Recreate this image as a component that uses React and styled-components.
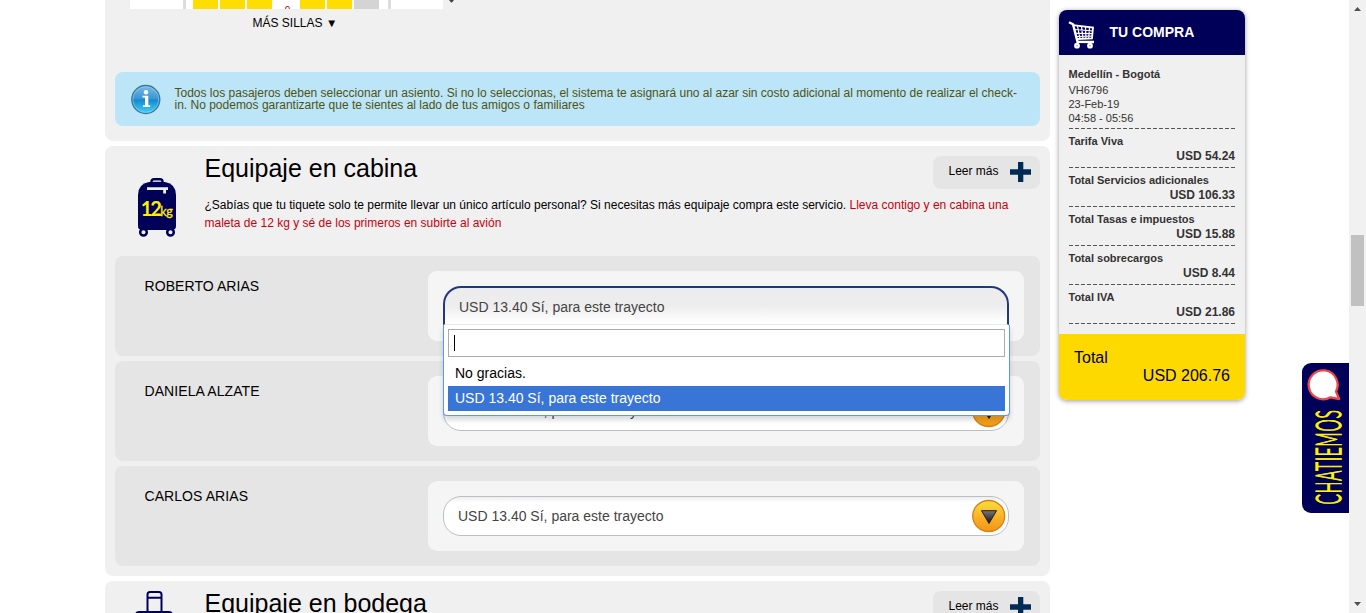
import React from "react";
import styled, { createGlobalStyle, css } from "styled-components";

const GlobalStyle = createGlobalStyle`
  * { box-sizing: border-box; }
  html, body { margin: 0; height: 100%; overflow: hidden; }
  body { background: #fff; color: #000; font-family: Arial, "Liberation Sans", sans-serif; font-size: 12px; }
  h2, p, ul { margin: 0; padding: 0; font-weight: normal; }
`;

const Page = styled.div`
  display: flex;
  align-items: flex-start;
  height: 613px;
  width: 1366px;
  overflow: hidden;
`;

const Main = styled.main`
  display: flex;
  flex-direction: column;
  gap: 5px;
  flex: none;
  width: 945px;
  height: 613px;
  margin-left: 105px;
  overflow: hidden;
`;

const Section = styled.section`
  flex: none;
  height: ${(p) => p.$height}px;
  padding: 0 10px;
  background: #f0f0f0;
  border-radius: ${(p) => (p.$open ? "0 0 8px 8px" : "8px")};
`;

const SeatRow = styled.div`
  display: flex;
  gap: 2px;
  width: 313px;
  height: 9px;
  margin-left: 15px;
  background: #fff;
`;

const Wall = styled.div`
  width: 3px;
  margin: 0 ${(p) => p.$right}px 0 ${(p) => p.$left}px;
  background: #ddd;
`;

const Seat = styled.div`
  width: 25px;
  background: ${(p) => (p.$taken ? "#d4d4d4" : "#fd0")};
`;

const Aisle = styled.div`
  width: 24px;
  height: 9px;
  overflow: hidden;
  padding: 5px 0 0 3px;
  font-size: 10px;
  line-height: 12px;
  text-align: center;
  color: #a00020;
`;

const SeatBar = styled.div`
  display: flex;
  justify-content: space-between;
  width: 340px;
`;

const Marker = styled.svg`
  width: 6px;
  height: 3px;
`;

const MoreSeats = styled.div`
  display: flex;
  gap: 3.5px;
  margin: 6px 0 0 137.5px;
  line-height: 16px;

  span { font-size: 11.5px; }
`;

const InfoBox = styled.div`
  display: flex;
  height: 54px;
  margin-top: 41px;
  padding: 12px 16px;
  background: #bce5f7;
  border-radius: 8px;
  color: #4f5312;
  line-height: 12px;

  svg { flex: none; margin-right: 13.5px; }
  p { padding-top: 3px; white-space: nowrap; }
`;

const SectionHead = styled.div`
  display: flex;
  height: 110px;
`;

const HeadIcon = styled.div`
  flex: none;
  width: 89.5px;
  padding: ${(p) => p.$top}px 0 0 ${(p) => p.$left}px;
`;

const HeadText = styled.div`
  flex: 1;
  padding-top: 7px;

  p {
    margin-top: 13px;
    line-height: 18px;
    white-space: nowrap;
  }
  em { font-style: normal; color: #c8000f; }
`;

const TitleLine = styled.div`
  display: flex;
  justify-content: space-between;
  height: 30px;
`;

const Title = styled.h2`
  font-size: 25px;
  line-height: 30px;
`;

const ReadMore = styled.div`
  display: flex;
  flex: none;
  width: 107px;
  height: 33px;
  margin-top: 3px;
  padding: 6px 9px 0 15.5px;
  justify-content: space-between;
  background: #e5e5e5;
  border-radius: 8px;
  line-height: 18px;
`;

const Rows = styled.div`
  display: flex;
  flex-direction: column;
  gap: 5px;
`;

const Row = styled.div`
  display: flex;
  justify-content: space-between;
  height: 100px;
  padding: 15px 16px 15px 29.5px;
  background: #e5e5e5;
  border-radius: 8px;
`;

const Name = styled.div`
  padding-top: 6px;
  font-size: 14px;
  line-height: 18px;
  letter-spacing: 0.07px;
`;

const Field = styled.div`
  width: 596px;
  height: 70px;
  padding: 15px;
  background: #f5f5f5;
  border-radius: 9px;
`;

const Select = styled.div`
  position: relative;
  display: flex;
  align-items: center;
  justify-content: space-between;
  height: 40px;
  padding: 0 2px 0 14px;
  border: 1px solid #bbbfc2;
  border-radius: 18px;
  background: linear-gradient(#eee 0, #fff 15%);
  color: #444;
  font-size: 14px;

  ${(p) =>
    p.$open &&
    css`
      height: 39px;
      padding-top: 2px;
      border: 2px solid #23387c;
      border-bottom: 1px solid #e9e9e9;
      border-radius: 18px 18px 0 0;
      background: linear-gradient(#ececec 0, #ededed 50%, #fff 96%);
    `}
`;

const Menu = styled.div`
  position: absolute;
  z-index: 2;
  left: -2px;
  top: 37px;
  width: 567px;
  height: 91px;
  padding: 4px;
  background: #fff;
  border: 1px solid #5897fb;
  border-top: 0;
  border-radius: 0 0 4px 4px;
  box-shadow: 0 4px 5px rgba(0, 0, 0, 0.15);
  color: #000;
`;

const Search = styled.div`
  height: 28px;
  margin-bottom: 4px;
  padding: 5px;
  border: 1px solid #aaa;
`;

const Caret = styled.div`
  width: 1px;
  height: 16px;
  background: #000;
`;

const Option = styled.div`
  height: 25px;
  padding-left: 7px;
  line-height: 25px;
  background: ${(p) => (p.$active ? "#3875d7" : "transparent")};
  color: ${(p) => (p.$active ? "#fff" : "#000")};
`;

const Cart = styled.aside`
  flex: none;
  width: 186px;
  margin: 10px 0 0 9px;
  background: #f0f0f0;
  border-radius: 8px;
  box-shadow: 0 1px 5px rgba(0, 0, 0, 0.4);
  color: #333;
  overflow: hidden;
`;

const CartHead = styled.div`
  display: flex;
  align-items: center;
  gap: 13px;
  height: 45px;
  padding-left: 9px;
  background: #000058;
  color: #fff;
  font-size: 14px;
  font-weight: bold;

  svg { margin-top: 4px; }
  span { margin: 0 0 2px 0.5px; }
`;

const CartBody = styled.div`
  height: 279px;
  padding: 11px 10px 0 9.5px;
`;

const Dashes = styled.div`
  height: 1px;
  background: repeating-linear-gradient(90deg, #555 0 4px, transparent 4px 6px);
`;

const Flight = styled.div`
  height: 62px;
  font-size: 11px;
  line-height: 14px;

  b { display: block; line-height: 17px; }
`;

const Charge = styled.div`
  height: 38px;
  padding-top: 5px;
  font-weight: bold;
  font-size: 11px;
  line-height: 15px;

  div { text-align: right; font-size: 12px; line-height: 14px; }
`;

const CartTotal = styled.div`
  height: 66px;
  padding: 15px;
  background: #fed900;
  color: #00003c;
  font-size: 16px;
  line-height: 18px;

  div { text-align: right; }
`;

const Chat = styled.div`
  flex: none;
  width: 47px;
  height: 150px;
  margin: 363px 0 0 57px;
  background: #000058;
  border-radius: 9px 0 0 9px;
`;

const ScrollTrack = styled.div`
  display: flex;
  flex-direction: column;
  align-items: center;
  flex: none;
  width: 17px;
  height: 613px;
  padding: 6px 0;
  background: #f1f1f1;
`;

const ScrollThumb = styled.div`
  width: 13px;
  height: 71px;
  margin: 223px 0 auto;
  background: #c1c1c1;
`;

const InfoIcon = () => (
  <svg width="30" height="31" viewBox="0 0 30 31">
    <defs>
      <linearGradient id="info" x2="0" y2="1">
        <stop offset="0" stopColor="#82b8e4" />
        <stop offset=".48" stopColor="#3197d5" />
        <stop offset=".52" stopColor="#1688cf" />
        <stop offset="1" stopColor="#42d5f8" />
      </linearGradient>
    </defs>
    <circle cx="14.8" cy="15.500" r="14" fill="url(#info)" stroke="#3a7794" strokeWidth="1.3" />
    <circle cx="14.8" cy="15.500" r="12.900" fill="none" stroke="#a7dcf2" strokeWidth=".7" opacity=".7" />
    <circle cx="15" cy="8.300" r="2.200" fill="#fff" />
    <path d="M11.500 11.800h5.800v9.400h1.900v1.700h-7.200v-1.700h2V13.500h-2.500z" fill="#fff" />
  </svg>
);

const CabinBag = () => (
  <svg width="38" height="60" viewBox="0 0 38 60">
    <path d="M13.500 5V3.500Q13.500 1.200 16 1.200h6Q24.500 1.200 24.500 3.500V5" fill="none" stroke="#000058" strokeWidth="2.400" />
    <path d="M11 4h16q11 2 11 13v31q0 4-4 4H4q-4 0-4-4V17Q0 6 11 4z" fill="#000058" />
    <path d="M15 3.300h8" stroke="#b5b5d2" strokeWidth="1" />
    <path d="M9 9.200h21v2.700h-2v3.500h-2.800v-3.500H9z" fill="#f0f0f0" />
    <circle cx="5.500" cy="54.300" r="3.300" fill="#f0f0f0" stroke="#000058" strokeWidth="2.500" />
    <circle cx="32.500" cy="54.300" r="3.300" fill="#f0f0f0" stroke="#000058" strokeWidth="2.500" />
    <text fill="#fe0" fontFamily="Lato, sans-serif" fontWeight="700" fontSize="20" letterSpacing="-2.200">
      <tspan x="2.800" y="37.500">12</tspan>
      <tspan x="22.200" y="37.500" fontSize="12.500" fontWeight="400" letterSpacing="-.3" stroke="#fe0" strokeWidth=".3">kg</tspan>
    </text>
  </svg>
);

const HoldBag = () => (
  <svg width="38" height="24" viewBox="0 0 38 24">
    <path d="M12.500 22V3.500Q12.500 1 15 1h9Q26.500 1 26.500 3.500V22M12.500 6.700h14" fill="none" stroke="#000058" strokeWidth="2" />
    <path d="M0 24q0-4 4-4h30q4 0 4 4z" fill="#000058" />
  </svg>
);

const Plus = () => (
  <svg width="21" height="20" viewBox="0 0 21 20">
    <path d="M8 0h5.300v7.300H21v5.400h-7.700V20H8v-7.300H0V7.300h8z" fill="#002b54" />
  </svg>
);

const ArrowButton = () => (
  <svg width="34" height="34" viewBox="0 0 34 34">
    <defs>
      <linearGradient id="gold" x2="0" y2="1">
        <stop offset="0" stopColor="#fae03f" />
        <stop offset=".6" stopColor="#f8ac24" />
        <stop offset="1" stopColor="#f29615" />
      </linearGradient>
      <linearGradient id="dark" x2="0" y2="1">
        <stop offset="0" stopColor="#777" />
        <stop offset="1" stopColor="#111" />
      </linearGradient>
    </defs>
    <ellipse cx="16.700" cy="17" rx="16" ry="15.500" fill="url(#gold)" stroke="#d5811a" strokeWidth="1.300" />
    <path d="M9.500 11.700h15L17 24.500z" fill="url(#dark)" stroke="#211d18" strokeWidth="1" />
  </svg>
);

const CartIcon = () => (
  <svg width="28" height="28" viewBox="0 0 28 28" fill="none" stroke="#fff">
    <path d="M1 1.300l4 2 4.500 17.500 16.500.2" strokeWidth="2.400" />
    <path d="M5 4.200L25 6.500l-1 11-15.500.5" strokeWidth="1.800" />
    <path d="M6.500 8.500l18.500 1.500M7.500 12.300l17 .4M8.600 15.500l16-.4M9.500 5l2.500 13M13.500 5.500l1.500 12M17.500 6l.5 12M21.500 6.500l-.8 11" strokeWidth="1.200" />
    <circle cx="9" cy="24.700" r="1.700" strokeWidth="2.400" />
    <circle cx="22" cy="24.700" r="1.700" strokeWidth="2.400" />
  </svg>
);

const ChatArt = () => (
  <svg width="47" height="150" viewBox="0 0 47 150">
    <path d="M28.500 34.300A14.500 14.500 0 1 1 34 28.500L37.200 36z" fill="#fff" stroke="#f24545" strokeWidth="2.300" strokeLinejoin="round" />
    <text
      transform="translate(38.500 141.500) rotate(-90) scale(.44 1)"
      fill="#fff200"
      stroke="#fff200"
      strokeWidth="1.400"
      fontFamily="Lato, sans-serif"
      fontWeight="300"
      fontSize="35"
      textLength="214"
      lengthAdjust="spacing"
    >
      CHATIEMOS
    </text>
  </svg>
);

const ScrollArrow = ({ down }) => (
  <svg width="9" height="6" viewBox="0 0 9 6">
    <path d={down ? "M1 1h7L4.500 5z" : "M1 5h7L4.500 1z"} fill="#505050" />
  </svg>
);

const OFFER = "USD 13.40 Sí, para este trayecto";

const Passenger = ({ name, open }) => (
  <Row>
    <Name>{name}</Name>
    <Field>
      <Select $open={open}>
        <span>{OFFER}</span>
        {open ? (
          <Menu>
            <Search><Caret /></Search>
            <Option>No gracias.</Option>
            <Option $active>{OFFER}</Option>
          </Menu>
        ) : (
          <ArrowButton />
        )}
      </Select>
    </Field>
  </Row>
);

const More = () => (
  <ReadMore><span>Leer más</span><Plus /></ReadMore>
);

const CHARGES = [
  ["Tarifa Viva", "USD 54.24"],
  ["Total Servicios adicionales", "USD 106.33"],
  ["Total Tasas e impuestos", "USD 15.88"],
  ["Total sobrecargos", "USD 8.44"],
  ["Total IVA", "USD 21.86"],
];

export default function App() {
  return (
    <Page>
      <GlobalStyle />
      <Main>
        <Section $height={141} $open>
          <SeatBar>
            <SeatRow>
              <Wall $left={53} $right={5} />
              <Seat /><Seat /><Seat />
              <Aisle>9</Aisle>
              <Seat /><Seat /><Seat $taken />
              <Wall $left={7} $right={0} />
            </SeatRow>
            <Marker viewBox="0 0 6 3"><path d="M0 0h5L3 2.500H2z" fill="#444" /></Marker>
          </SeatBar>
          <MoreSeats>MÁS SILLAS <span>▼</span></MoreSeats>
          <InfoBox>
            <InfoIcon />
            <p>
              Todos los pasajeros deben seleccionar un asiento. Si no lo seleccionas, el sistema te asignará uno al azar sin costo adicional al momento de realizar el check-
              <br />
              in. No podemos garantizarte que te sientes al lado de tus amigos o familiares
            </p>
          </InfoBox>
        </Section>

        <Section $height={430}>
          <SectionHead>
            <HeadIcon $top={32} $left={23}><CabinBag /></HeadIcon>
            <HeadText>
              <TitleLine><Title>Equipaje en cabina</Title><More /></TitleLine>
              <p>
                ¿Sabías que tu tiquete solo te permite llevar un único artículo personal? Si necesitas más equipaje compra este servicio. <em>Lleva contigo y en cabina una
                <br />
                maleta de 12 kg y sé de los primeros en subirte al avión</em>
              </p>
            </HeadText>
          </SectionHead>
          <Rows>
            <Passenger name="ROBERTO ARIAS" open />
            <Passenger name="DANIELA ALZATE" />
            <Passenger name="CARLOS ARIAS" />
          </Rows>
        </Section>

        <Section $height={430}>
          <SectionHead>
            <HeadIcon $top={10} $left={20}><HoldBag /></HeadIcon>
            <HeadText>
              <TitleLine><Title>Equipaje en bodega</Title><More /></TitleLine>
            </HeadText>
          </SectionHead>
        </Section>
      </Main>

      <Cart>
        <CartHead><CartIcon /><span>TU COMPRA</span></CartHead>
        <CartBody>
          <Flight>
            <b>Medellín - Bogotá</b>
            VH6796<br />23-Feb-19<br />04:58 - 05:56
          </Flight>
          <Dashes />
          {CHARGES.map(([label, amount]) => (
            <React.Fragment key={label}>
              <Charge>{label}<div>{amount}</div></Charge>
              <Dashes />
            </React.Fragment>
          ))}
        </CartBody>
        <CartTotal>Total<div>USD 206.76</div></CartTotal>
      </Cart>

      <Chat><ChatArt /></Chat>

      <ScrollTrack>
        <ScrollArrow />
        <ScrollThumb />
        <ScrollArrow down />
      </ScrollTrack>
    </Page>
  );
}
